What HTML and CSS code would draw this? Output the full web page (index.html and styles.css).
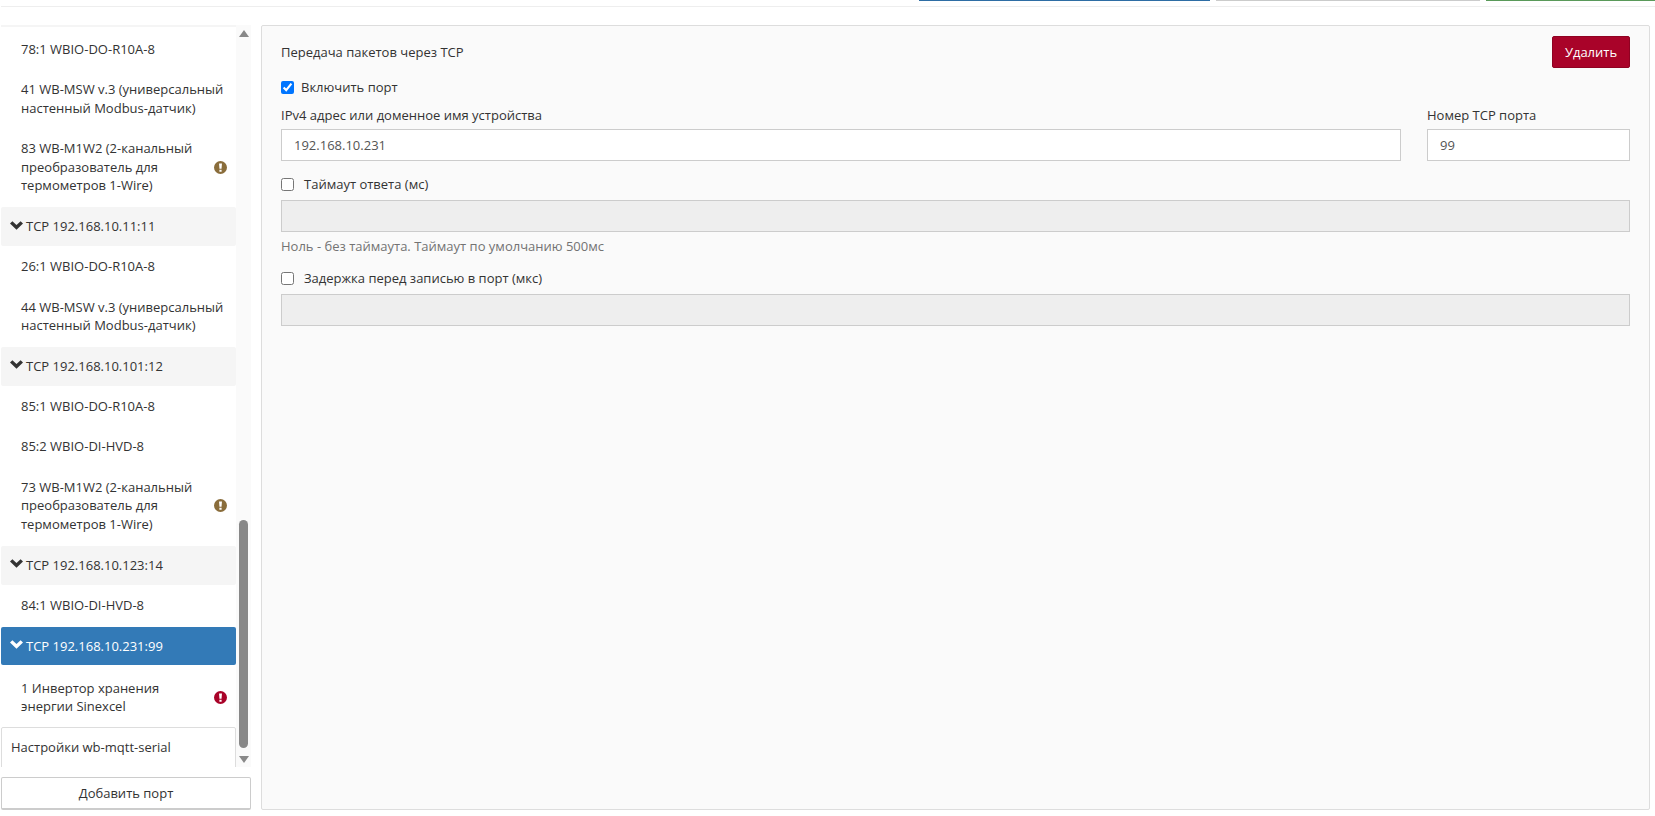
FILE: index.html
```html
<!DOCTYPE html>
<html lang="ru">
<head>
<meta charset="utf-8">
<title>Настройки портов</title>
<link rel="stylesheet" href="styles.css">
</head>
<body>
<svg class="defs" aria-hidden="true">
  <symbol id="chev" viewBox="0 0 13 9"><path d="M0 2.6 2.4 .2 6.5 3.9 10.6 .2 13 2.6 6.5 8.8Z"/></symbol>
  <symbol id="warn" viewBox="0 0 14 14"><path fill-rule="evenodd" d="M7 0a7 7 0 1 1 0 14A7 7 0 0 1 7 0ZM5.4 2.6 5.9 8.4H8.1L8.6 2.6ZM5.8 9.4V11.6H8.2V9.4Z"/></symbol>
</svg>
<header class="topbar">
  <span class="strip strip-blue"></span>
  <span class="strip strip-gray"></span>
  <span class="strip strip-green"></span>
</header>
<main class="main">
  <aside class="sidebar">
    <div class="scroller">
      <nav class="list">
        <a class="item">78:1 WBIO-DO-R10A-8</a>
        <a class="item">41 WB-MSW v.3 (универсальный настенный Modbus-датчик)</a>
        <a class="item"><span class="item-text">83 WB-M1W2 (2-канальный преобразователь для термометров 1-Wire)</span><svg class="sign sign-warn"><use href="#warn"/></svg></a>
        <a class="port"><svg class="chev"><use href="#chev"/></svg>TCP 192.168.10.11:11</a>
        <a class="item">26:1 WBIO-DO-R10A-8</a>
        <a class="item">44 WB-MSW v.3 (универсальный настенный Modbus-датчик)</a>
        <a class="port"><svg class="chev"><use href="#chev"/></svg>TCP 192.168.10.101:12</a>
        <a class="item">85:1 WBIO-DO-R10A-8</a>
        <a class="item">85:2 WBIO-DI-HVD-8</a>
        <a class="item"><span class="item-text">73 WB-M1W2 (2-канальный преобразователь для термометров 1-Wire)</span><svg class="sign sign-warn"><use href="#warn"/></svg></a>
        <a class="port"><svg class="chev"><use href="#chev"/></svg>TCP 192.168.10.123:14</a>
        <a class="item">84:1 WBIO-DI-HVD-8</a>
        <a class="port port-active"><svg class="chev"><use href="#chev"/></svg>TCP 192.168.10.231:99</a>
        <a class="item"><span class="item-text">1 Инвертор хранения энергии Sinexcel</span><svg class="sign sign-danger"><use href="#warn"/></svg></a>
        <a class="settings">Настройки wb-mqtt-serial</a>
      </nav>
      <div class="scrollbar">
        <span class="arrow arrow-up"></span>
        <span class="thumb"></span>
        <span class="arrow arrow-down"></span>
      </div>
    </div>
    <button class="add-btn" type="button">Добавить порт</button>
  </aside>
  <section class="panel">
    <div class="panel-head">
      <span class="panel-title">Передача пакетов через TCP</span>
      <button class="del-btn" type="button">Удалить</button>
    </div>
    <label class="check check-enable"><input type="checkbox" checked>Включить порт</label>
    <div class="row">
      <div class="field field-grow">
        <label class="label">IPv4 адрес или доменное имя устройства</label>
        <input class="input" type="text" value="192.168.10.231">
      </div>
      <div class="field field-port">
        <label class="label">Номер TCP порта</label>
        <input class="input" type="text" value="99">
      </div>
    </div>
    <label class="check check-opt"><input type="checkbox">Таймаут ответа (мс)</label>
    <input class="input" type="text" disabled>
    <p class="help">Ноль - без таймаута. Таймаут по умолчанию 500мс</p>
    <label class="check check-opt"><input type="checkbox">Задержка перед записью в порт (мкс)</label>
    <input class="input" type="text" disabled>
  </section>
</main>
</body>
</html>
```
FILE: styles.css
```css
* { box-sizing: border-box; }
html, body { margin: 0; height: 100%; }
body {
  font-family: "Open Sans", "Noto Sans", sans-serif;
  font-size: 13px;
  line-height: 18.57px;
  color: #333;
  background: #fff;
  overflow: hidden;
}
.defs { display: none; }

.topbar {
  height: 7px;
  margin-left: 1px;
  border-bottom: 1px solid #eee;
  display: flex;
  align-items: flex-start;
  justify-content: flex-end;
}
.strip { display: block; height: 1px; margin-left: 6px; }
.strip-blue { width: 291px; background: #2e6da4; }
.strip-gray { width: 264px; background: #ccc; }
.strip-green { width: 169px; background: #5a9a5a; }

.main {
  display: flex;
  gap: 10px;
  padding: 18px 5px 0 1px;
  height: 803px;
}

.sidebar {
  width: 250px;
  flex: none;
  display: flex;
  flex-direction: column;
  gap: 10px;
}
.scroller {
  height: 742px;
  display: flex;
  overflow: hidden;
}
.list {
  width: 235px;
  flex: none;
  border-top: 2px solid #f5f5f5;
  padding-top: 1.5px;
  overflow: hidden;
}
.item {
  display: flex;
  align-items: center;
  justify-content: space-between;
  padding: 11px 9px 11px 20px;
}
.item-text { width: 184px; }
.sign { width: 13px; height: 13px; flex: none; }
.sign-warn { fill: #8a6d3b; }
.sign-danger { fill: #a90329; }

.port {
  display: flex;
  align-items: center;
  height: 38.6px;
  margin-top: 1.5px;
  padding-left: 9px;
  background: #f5f5f5;
  border-radius: 2px;
}
.port-active { background: #337ab7; color: #fff; margin-bottom: 2.5px; }
.chev { width: 13px; height: 9px; margin: -3px 3px 0 0; fill: #333; }
.port-active .chev { fill: #fff; }

.settings {
  display: block;
  height: 60px;
  padding: 10px 9px;
  border: 1px solid #ddd;
  border-radius: 2px;
}

.scrollbar {
  width: 15px;
  flex: none;
  background: #fafafa;
  display: flex;
  flex-direction: column;
  align-items: center;
}
.arrow {
  width: 0;
  height: 0;
  border-left: 5px solid transparent;
  border-right: 5px solid transparent;
}
.arrow-up { margin-top: 5px; border-bottom: 7px solid #888; }
.arrow-down { margin-top: 8px; border-top: 7px solid #888; }
.thumb {
  flex: none;
  width: 9px;
  height: 228px;
  margin-top: 483px;
  background: #888;
  border-radius: 5px;
}

.add-btn {
  height: 33px;
  width: 100%;
  font: inherit;
  color: #333;
  background: #fff;
  border: 1px solid #ccc;
  border-bottom-width: 2px;
  border-radius: 2px;
}

.panel {
  flex: 1;
  height: 785px;
  padding: 10px 19px 0;
  background: #fafafa;
  border: 1px solid #ddd;
  border-radius: 2px;
}
.panel-head {
  display: flex;
  justify-content: space-between;
  align-items: flex-start;
  height: 37px;
}
.panel-title { margin-top: 7px; }
.del-btn {
  width: 78px;
  height: 32px;
  padding: 0;
  font: inherit;
  color: #fff;
  background: #a90329;
  border: 1px solid #8f0222;
  border-radius: 2px;
}

.check { display: flex; align-items: center; }
.check input { width: 13px; height: 13px; margin: 0 7px 0 0; flex: none; }
.check-enable { margin-top: 5px; }
.check-opt input { margin-right: 10px; }
.check-opt { margin-top: 14px; margin-bottom: 6px; }

.row { display: flex; gap: 26px; margin-top: 9px; }
.field { display: flex; flex-direction: column; }
.field-grow { flex: 1; }
.field-port { width: 203px; }
.label { margin-bottom: 5px; }

.input {
  display: block;
  width: 100%;
  height: 32px;
  padding: 0 12px;
  font: inherit;
  color: #555;
  background: #fff;
  border: 1px solid #ccc;
  border-radius: 0;
}
.input:disabled { background: #eee; }
.help { margin: 5px 0 0; color: #737373; }
```
